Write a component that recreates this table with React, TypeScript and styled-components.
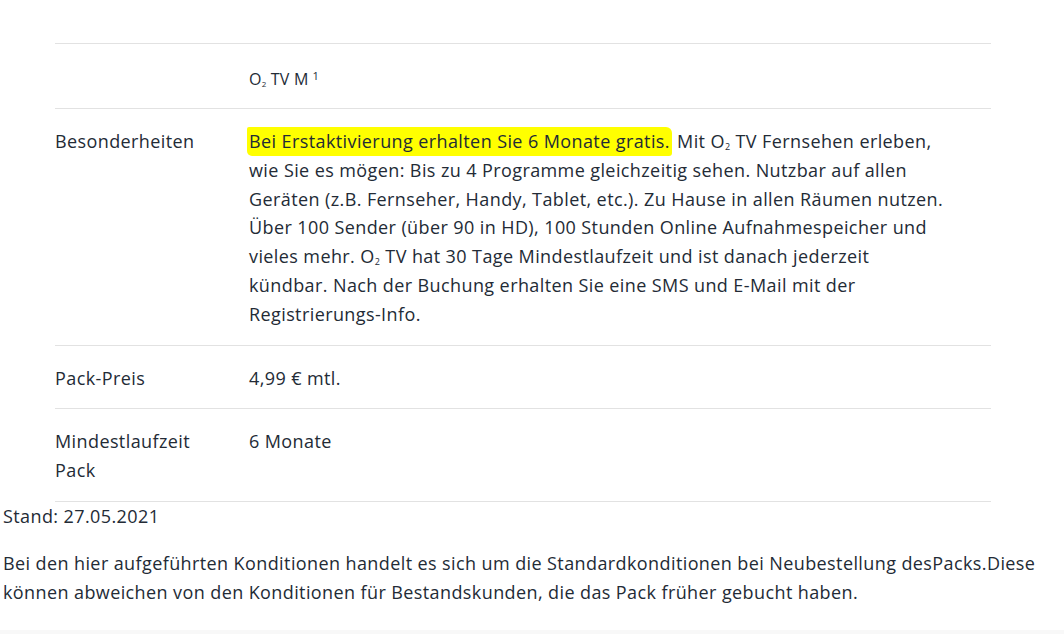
import React from 'react';
import styled, { createGlobalStyle } from 'styled-components';

const GlobalStyle = createGlobalStyle`
  html, body {
    margin: 0;
    padding: 0;
    background: #ffffff;
  }
  body {
    font-family: "Open Sans", Lato, sans-serif;
    color: #232b36;
    font-size: 18px;
    line-height: 28.8px;
    letter-spacing: 0.4px;
  }
`;

const Page = styled.div`
  padding: 43px 3px 0;
  min-height: 634px;
  box-sizing: border-box;
  display: flex;
  flex-direction: column;
`;

const Table = styled.div`
  margin: 0 70px 0 52px;
  border-top: 1px solid #e2e2e2;
`;

const Row = styled.div<{ $top: number; $bottom: number }>`
  display: grid;
  grid-template-columns: 194px 1fr;
  padding: ${p => p.$top}px 40px ${p => p.$bottom}px 0;
  border-bottom: 1px solid #e2e2e2;
`;

const Label = styled.div`
  padding-right: 16px;
`;

const Value = styled.div``;

const HeadValue = styled.div`
  font-size: 16px;
  line-height: 28px;
  letter-spacing: 0.2px;
`;

const Sub = styled.sub`
  font-size: 0.5em;
  vertical-align: -0.2em;
  line-height: 0;
`;

const Sup = styled.sup`
  font-size: 0.7em;
  vertical-align: 0.45em;
  line-height: 0;
  margin-left: 4px;
`;

const Marker = styled.mark`
  background: #ffff00;
  color: inherit;
  padding: 2px 2px 3px;
  margin-left: -2px;
  border-radius: 2px 6px 3px 5px;
`;

const Brand = styled.span`
  white-space: nowrap;
`;

const Stand = styled.p`
  margin: 0;
`;

const Note = styled.p`
  margin: 18px 0 0;
`;

const Footer = styled.div`
  margin-top: auto;
  height: 4px;
  background: #f8f8f8;
  margin-left: -3px;
  margin-right: -3px;
`;

const O2TV = () => (
  <Brand>
    O<Sub>2</Sub> TV
  </Brand>
);

export default function App() {
  return (
    <>
      <GlobalStyle />
      <Page>
        <Table>
          <Row $top={21} $bottom={15}>
            <Label />
            <HeadValue>
              <O2TV /> M<Sup>1</Sup>
            </HeadValue>
          </Row>
          <Row $top={18} $bottom={16}>
            <Label>Besonderheiten</Label>
            <Value>
              <Marker>Bei Erstaktivierung erhalten Sie 6 Monate gratis.</Marker> Mit <O2TV /> Fernsehen
              erleben, wie Sie es mögen: Bis zu 4 Programme gleichzeitig sehen. Nutzbar auf allen Geräten
              (z.B. Fernseher, Handy, Tablet, etc.). Zu Hause in allen Räumen nutzen. Über 100 Sender (über
              90 in HD), 100 Stunden Online Aufnahmespeicher und vieles mehr. <O2TV /> hat 30 Tage
              Mindestlaufzeit und ist danach jederzeit kündbar. Nach der Buchung erhalten Sie eine SMS und
              E-Mail mit der Registrierungs-Info.
            </Value>
          </Row>
          <Row $top={18} $bottom={16}>
            <Label>Pack-Preis</Label>
            <Value>4,99 € mtl.</Value>
          </Row>
          <Row $top={18} $bottom={16}>
            <Label>Mindestlaufzeit Pack</Label>
            <Value>6 Monate</Value>
          </Row>
        </Table>
        <Stand>Stand: 27.05.2021</Stand>
        <Note>
          Bei den hier aufgeführten Konditionen handelt es sich um die Standardkonditionen bei Neubestellung
          desPacks.Diese können abweichen von den Konditionen für Bestandskunden, die das Pack früher gebucht
          haben.
        </Note>
        <Footer />
      </Page>
    </>
  );
}
